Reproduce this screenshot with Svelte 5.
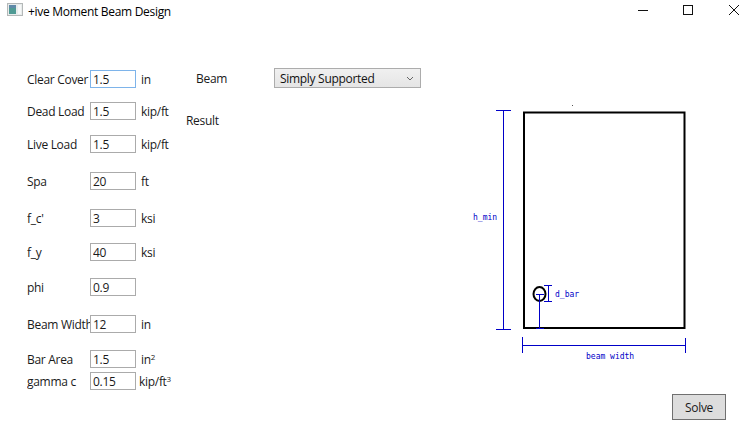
<script>
	// form rows, top margin is the gap to the row above
	const rows = [
		{ label: 'Clear Cover', value: '1.5', unit: 'in', gap: 0, focus: true },
		{ label: 'Dead Load', value: '1.5', unit: 'kip/ft', gap: 14 },
		{ label: 'Live Load', value: '1.5', unit: 'kip/ft', gap: 15 },
		{ label: 'Spa', value: '20', unit: 'ft', gap: 19 },
		{ label: 'f_c\'', value: '3', unit: 'ksi', gap: 19 },
		{ label: 'f_y', value: '40', unit: 'ksi', gap: 16 },
		{ label: 'phi', value: '0.9', unit: '', gap: 17 },
		{ label: 'Beam Width', value: '12', unit: 'in', gap: 19 },
		{ label: 'Bar Area', value: '1.5', unit: 'in', sup: '2', gap: 17 },
		{ label: 'gamma c', value: '0.15', unit: 'kip/ft', sup: '3', gap: 4, tight: true }
	];
</script>

<div class="window">
	<header class="titlebar">
		<svg class="app-icon" width="16" height="14" viewBox="0 0 16 14">
			<rect x="0.5" y="0.5" width="15" height="12" fill="#e8ecec" stroke="#b4b8b8" />
			<rect x="2" y="2" width="7" height="9" fill="#4f9a94" />
			<rect x="2" y="2" width="7" height="3" fill="#5f89a8" />
			<rect x="11" y="2" width="3" height="9" fill="#f6f8f8" />
		</svg>
		<span class="title">+ive Moment Beam Design</span>
		<div class="controls">
			<svg width="101" height="12" viewBox="0 0 101 12">
				<path d="M0 5.5H10" stroke="#111" fill="none" />
				<rect x="45.5" y="0.5" width="9" height="9" stroke="#111" fill="none" />
				<path d="M91 0L101 10M101 0L91 10" stroke="#111" fill="none" />
			</svg>
		</div>
	</header>

	<main class="content">
		<section class="form">
			{#each rows as row}
				<div class="row" style="margin-top: {row.gap}px">
					<span class="label">{row.label}</span>
					<input class="field" class:focus={row.focus} value={row.value} />
					<span class="unit" class:tight={row.tight}>{row.unit}{#if row.sup}<sup>{row.sup}</sup>{/if}</span>
				</div>
			{/each}
		</section>

		<section class="middle">
			<div class="beam-row">
				<span class="beam-label">Beam</span>
				<div class="select">
					<span>Simply Supported</span>
					<svg width="8" height="5" viewBox="0 0 8 5"><path d="M1 1L4 4L7 1" stroke="#666" fill="none" /></svg>
				</div>
			</div>
			<div class="result">Result</div>
		</section>

		<section class="drawing">
			<svg width="290" height="270" viewBox="465 100 290 270">
				<!-- beam section -->
				<rect x="524" y="112.5" width="160.5" height="215.5" fill="#fff" stroke="#000" stroke-width="2" />
				<rect x="572" y="105" width="1" height="1" fill="#555" />
				<ellipse cx="539.5" cy="294" rx="6" ry="7" fill="none" stroke="#000" stroke-width="2" />

				<g stroke="#0000c8" fill="none">
					<path d="M503.5 110V330M496 110.5H511M496 329.5H511" />
					<path d="M539.5 294V328M536 294.5H544M536 328.5H544" />
					<path d="M548.5 285V302M544 285.5H552M544 301.5H552" />
					<path d="M522.5 337V353M522.5 345.5H685.5M685.5 338V353" />
				</g>

				<g class="dim">
					<text x="473" y="220">h_min</text>
					<text x="555" y="297">d_bar</text>
					<text x="586" y="359">beam width</text>
				</g>
			</svg>
			<button class="solve">Solve</button>
		</section>
	</main>
</div>

<style>
	:global(body) {
		margin: 0;
		background: #fff;
	}

	.window {
		width: 754px;
		height: 434px;
		overflow: hidden;
		font-family: "Open Sans", "Noto Sans", sans-serif;
		font-size: 12px;
		letter-spacing: -0.3px;
		color: #1a1a1a;
	}

	.titlebar {
		display: flex;
		align-items: center;
		height: 22px;
		padding-left: 7px;
	}
	.app-icon {
		margin-right: 5px;
		margin-top: -3px;
	}
	.title {
		color: #000;
	}
	.controls {
		margin-left: auto;
		padding-right: 15px;
		display: flex;
	}

	.content {
		display: flex;
		height: 412px;
	}

	.form {
		width: 186px;
		flex: none;
		padding: 48px 0 0 27px;
		box-sizing: border-box;
	}
	.row {
		display: flex;
		align-items: center;
		height: 18px;
	}
	.label {
		width: 63px;
		flex: none;
		overflow: hidden;
		white-space: nowrap;
	}
	.field {
		width: 46px;
		height: 18px;
		box-sizing: border-box;
		border: 1px solid #ababab;
		padding: 0 2px;
		margin: 0;
		font: inherit;
		letter-spacing: inherit;
		color: #1a1a1a;
		background: #fff;
		outline: none;
	}
	.field.focus {
		border-color: #7eb4ea;
	}
	.unit {
		margin-left: 5px;
		white-space: nowrap;
	}
	.unit.tight {
		margin-left: 3px;
	}
	.unit sup {
		font-size: 8px;
		line-height: 0;
		vertical-align: 4px;
	}

	.middle {
		width: 240px;
		flex: none;
	}
	.beam-row {
		display: flex;
		align-items: center;
		margin-top: 46px;
		padding-left: 10px;
	}
	.beam-label {
		width: 78px;
		flex: none;
	}
	.select {
		width: 147px;
		height: 20px;
		box-sizing: border-box;
		display: flex;
		align-items: center;
		justify-content: space-between;
		padding: 0 6px 0 5px;
		border: 1px solid #acacac;
		background: linear-gradient(#f0f0f0, #e5e5e5);
		color: #111;
	}
	.result {
		margin-top: 24px;
	}

	.drawing {
		position: relative;
		flex: 1;
	}
	.drawing > svg {
		position: absolute;
		left: 39px;
		top: 78px;
	}
	.dim text {
		font-family: "DejaVu Sans Mono", "Liberation Mono", monospace;
		font-size: 8px;
		letter-spacing: 0;
		fill: #0000c8;
	}
	.solve {
		position: absolute;
		left: 246px;
		top: 372px;
		width: 54px;
		height: 26px;
		box-sizing: border-box;
		border: 1px solid #707070;
		background: #dddddd;
		font: inherit;
		letter-spacing: inherit;
		color: #1a1a1a;
		padding: 0;
	}
</style>
